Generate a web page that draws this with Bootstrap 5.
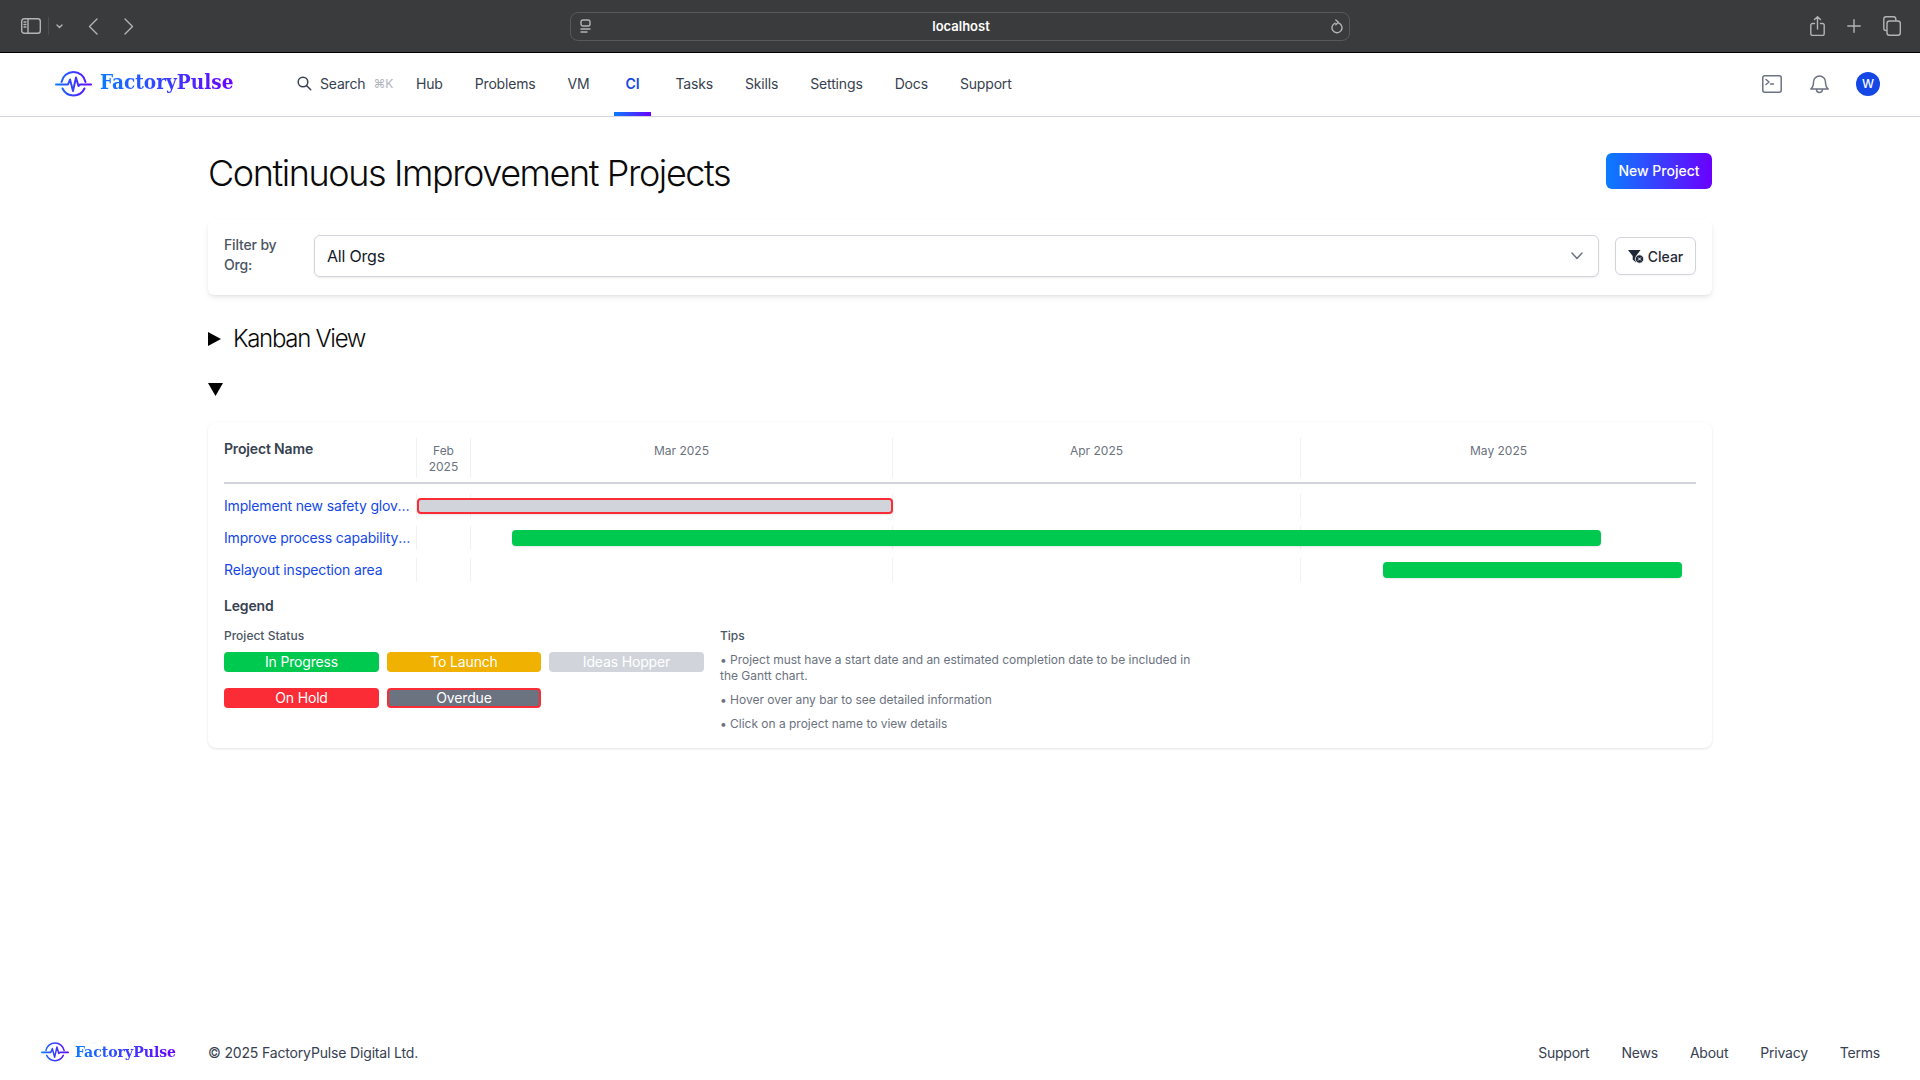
<!DOCTYPE html>
<html lang="en">
<head>
<meta charset="utf-8">
<title>Continuous Improvement Projects</title>
<link href="https://cdn.jsdelivr.net/npm/bootstrap@5.3.0/dist/css/bootstrap.min.css" rel="stylesheet">
<style>
body{font-family:Inter,"Liberation Sans",sans-serif;background:#fff;color:#111827;font-size:14px;letter-spacing:-.16px}
.fp-shell{min-height:1080px}
.chrome-bar{height:53px;background:#3a3b3d;border-bottom:1px solid #000;padding:0 19px 0 21px}
.chrome-icon{stroke:#b4b4b6;fill:none;stroke-width:1.4;stroke-linecap:round;stroke-linejoin:round;display:block}
.chrome-left{width:549px}
.chrome-url{width:780px;height:29px;border:1px solid #58595b;border-radius:8px;color:#fff;font-size:13px;font-weight:600;padding:0 6px 0 9px;letter-spacing:0}
.chrome-url span{margin-top:1px}
.chrome-right{gap:22px;margin-left:auto}
.fp-nav{height:64px;border-bottom:1px solid #d1d5db;padding:0 40px 1px 55px;background:#fff}
.brand-word{font-family:"DejaVu Serif Condensed","DejaVu Serif",serif;font-weight:700;background:linear-gradient(90deg,#0a7cff,#6a00ff);-webkit-background-clip:text;background-clip:text;color:transparent;line-height:1.2;letter-spacing:0}
.brand-lg{font-size:20.6px;margin-left:8px;margin-top:-4px}
.brand-sm{font-size:15.6px;margin-left:6px}
.fp-search{color:#374151;margin-left:63.5px;width:107px;padding-bottom:1px}
.fp-search kbd{all:unset;color:#b0b5bd;font-size:12px;margin-left:8px}
.fp-links{gap:8px;margin-left:0;align-self:stretch}
.fp-link{color:#374151;text-decoration:none;padding:0 12px 1px;display:flex;align-items:center;height:calc(100% + 1px);position:relative}
.fp-link.is-on{color:#1447e6;font-weight:600;margin:0 4px}
.fp-link.is-on::after{content:"";position:absolute;left:0;right:0;bottom:0;height:4px;background:linear-gradient(90deg,#0a7cff,#6a00ff)}
.nav-tools{gap:28px;margin-left:auto}
.nav-icon{stroke:#6b7280;fill:none;stroke-width:1.5;stroke-linecap:round;stroke-linejoin:round;display:block}
.nav-bell{margin-right:-1px}
.fp-avatar{width:24px;height:24px;border-radius:50%;background:#1447e6;color:#fff;font-size:12px;font-weight:500}
.fp-main{width:1504px;margin:0 auto;padding-top:36px}
.page-head{margin-bottom:27px}
.page-title{font-size:36px;line-height:40px;font-weight:300;color:#0a0a0a;margin:0;letter-spacing:-1.42px}
.btn-grad{background:linear-gradient(90deg,#0a7cff,#6a00ff);color:#fff;border:0;height:36px;width:106px;border-radius:6px;font-size:14px;font-weight:500;padding:0 0 2px}
.btn-grad:hover{color:#fff}
.filter-panel{background:#fff;border-radius:6px;box-shadow:0 3px 6px -1px rgba(0,0,0,.1),0 1px 3px -1px rgba(0,0,0,.08);padding:0 16px 3px;height:75px;gap:16px;margin-bottom:27px}
.filter-label{width:74px;font-size:14px;line-height:20px;font-weight:500;color:#4b5563;padding-bottom:2px;flex:none}
.filter-select{height:42px;border:1px solid #d1d5db;border-radius:6px;box-shadow:0 1px 2px rgba(0,0,0,.08);font-size:16px;padding:0 40px 0 12px;color:#111827;letter-spacing:-.2px;background-size:14px 10px;background-position:right 14px center;background-image:url("data:image/svg+xml,%3csvg xmlns='http://www.w3.org/2000/svg' viewBox='0 0 14 10'%3e%3cpath fill='none' stroke='%236b7280' stroke-linecap='round' stroke-linejoin='round' stroke-width='1.5' d='M2 2l5 5.5L12 2'/%3e%3c/svg%3e")}
.btn-clear{height:38px;width:81px;border:1px solid #d1d5db;border-radius:6px;background:#fff;color:#1f2937;font-size:14px;font-weight:500;padding:0;gap:3px;box-shadow:0 1px 2px rgba(0,0,0,.04)}
.fold-head{list-style:none;font-size:24px;line-height:34px;font-weight:300;color:#0a0a0a;gap:12px;cursor:pointer;letter-spacing:-1.3px}
.fold-head::-webkit-details-marker{display:none}
.fold-gap{margin-bottom:17px}
.fold-empty{height:32px;margin-bottom:18px}
.gantt-panel{background:#fff;border-radius:8px;box-shadow:0 1px 3px rgba(0,0,0,.1),0 1px 2px -1px rgba(0,0,0,.06);padding:15px 16px 0;height:325px}
.gantt-head{border-bottom:2px solid #d1d5db;height:46px;padding-bottom:4px;margin-bottom:10px}
.gantt-name{width:192px;flex:none}
.gantt-title{font-weight:600;color:#374151;line-height:20px;padding-top:1px}
.gantt-scale{display:grid;grid-template-columns:54px 422px 408px 1fr;flex:1 1 auto;min-width:0}
.gantt-cell{border-left:1px solid #f0f1f3}
.gantt-month{font-size:12px;line-height:16px;color:#6b7280;text-align:center;padding-top:5px;letter-spacing:0}
.gantt-row{height:24px;margin-bottom:8px}
.gantt-link{color:#1447e6;text-decoration:none;line-height:24px;padding-right:3px;white-space:nowrap;overflow:hidden;text-overflow:ellipsis}
.gantt-track{position:relative}
.gantt-bar{position:absolute;top:4px;height:16px;border-radius:4px;box-shadow:0 1px 2px rgba(0,0,0,.1)}
.bar-go{background:#00c950}
.bar-late{background:#d1d5db;border:2px solid #fb2c36}
.legend-title{font-weight:600;color:#374151;line-height:20px;margin-top:14px;margin-bottom:12px}
.legend-grid{display:grid;grid-template-columns:480px 472px;gap:16px}
.legend-sub{font-size:12px;line-height:16px;font-weight:500;color:#4b5563;margin-bottom:8px;letter-spacing:0}
.chip-grid{display:grid;grid-template-columns:155px 154px 155px;column-gap:8px;row-gap:16px}
.chip-item{height:20px;border-radius:4px;color:#fff;font-size:14px;line-height:20px;text-align:center}
.chip-go{background:#00c950}
.chip-launch{background:#f0b100}
.chip-idea{background:#d1d5db}
.chip-hold{background:#fb2c36}
.chip-late{background:#6b7280;border:2px solid #fb2c36;line-height:16px}
.tip-line{font-size:12px;line-height:16px;color:#6b7280;margin:0 0 8px;letter-spacing:-.02px}
.fp-foot{margin-top:auto;height:56px;padding:0 40px 0 41px;color:#374151}
.foot-brand{width:167px}
.foot-links{gap:32px;margin-left:auto;letter-spacing:-.22px}
.foot-links a{color:#374151;text-decoration:none}
</style>
</head>
<body>
<svg width="0" height="0" class="position-absolute">
  <defs>
    <linearGradient id="pulseGrad" gradientUnits="userSpaceOnUse" x1="0" y1="0" x2="37" y2="0"><stop offset="0" stop-color="#0a7cff"/><stop offset="1" stop-color="#6a00ff"/></linearGradient>
    <symbol id="pulseMark" viewBox="0 0 37 26">
      <g fill="none" stroke="url(#pulseGrad)" stroke-width="2" stroke-linecap="round" stroke-linejoin="round">
        <path d="M6.500 11A12.200 12.200 0 0 1 30.500 11"/>
        <path d="M7.500 17.500A12.200 12.200 0 0 0 29.500 17.500"/>
        <path d="M1 13.500H13L15 8.500L18 20L21 6.500L23.500 15L25 13.500H36"/>
      </g>
    </symbol>
  </defs>
</svg>
<div class="fp-shell d-flex flex-column">
  <div class="chrome-bar d-flex align-items-center">
    <div class="chrome-left d-flex align-items-center">
      <svg class="chrome-icon" width="20" height="16" viewBox="0 0 20 16"><rect x=".7" y=".7" width="18.600" height="14.600" rx="2.500"/><path d="M7 1v14M3 4h2M3 6.500h2M3 9h2"/></svg>
      <span class="d-block" style="width:1px;height:18px;background:#4d4e50;margin:0 7px"></span>
      <svg class="chrome-icon" width="7" height="5" viewBox="0 0 7 5"><path d="M1 1l2.500 2.500L6 1"/></svg>
      <svg class="chrome-icon" width="10" height="17" viewBox="0 0 10 17" style="margin-left:25px"><path d="M9 1L1.500 8.500L9 16"/></svg>
      <svg class="chrome-icon" width="10" height="17" viewBox="0 0 10 17" style="margin-left:26px"><path d="M1 1l7.500 7.500L1 16"/></svg>
    </div>
    <div class="chrome-url d-flex align-items-center justify-content-between">
      <svg class="chrome-icon" width="11" height="15" viewBox="0 0 11 15"><rect x="1" y="1" width="9" height="6" rx="2"/><path d="M1 10h9M1 13h6"/></svg>
      <span>localhost</span>
      <svg class="chrome-icon" width="12" height="15" viewBox="0 0 12 15"><path d="M8 4.200a5 5 0 1 1-3.800-.1M4.800 1L7.400 3.200L4.800 5.700"/></svg>
    </div>
    <div class="chrome-right d-flex align-items-center">
      <svg class="chrome-icon" width="15" height="20" viewBox="0 0 15 20"><path d="M4.500 7.500H2.500a1.700 1.700 0 0 0-1.700 1.700v8.500a1.700 1.700 0 0 0 1.700 1.700h10a1.700 1.700 0 0 0 1.700-1.700V9.200a1.700 1.700 0 0 0-1.700-1.700H10.500M7.500 13V1M4.500 3.500L7.500 .8l3 2.700"/></svg>
      <svg class="chrome-icon" width="14" height="14" viewBox="0 0 14 14"><path d="M7 .8v12.400M.8 7h12.400"/></svg>
      <svg class="chrome-icon" width="18" height="20" viewBox="0 0 18 20"><rect x="4" y="5" width="13.300" height="14.300" rx="2.500"/><path d="M3.500 14.500H3A2.300 2.300 0 0 1 .8 12.200V3A2.300 2.300 0 0 1 3 .8h7.500A2.300 2.300 0 0 1 12.800 3v1.500"/></svg>
    </div>
  </div>

  <nav class="fp-nav d-flex align-items-center">
    <div class="d-flex align-items-center">
      <svg width="37" height="26"><use href="#pulseMark"/></svg>
      <span class="brand-word brand-lg">FactoryPulse</span>
    </div>
    <div class="fp-search d-flex align-items-center">
      <svg class="me-2" width="15" height="15" viewBox="0 0 15 15" fill="none" stroke="#374151" stroke-width="1.500" stroke-linecap="round"><circle cx="6" cy="6" r="4.800"/><path d="M9.700 9.700l4 4"/></svg>
      <span>Search</span><kbd>⌘K</kbd>
    </div>
    <div class="fp-links d-flex align-items-center">
      <a class="fp-link" href="#">Hub</a>
      <a class="fp-link" href="#">Problems</a>
      <a class="fp-link" href="#">VM</a>
      <a class="fp-link is-on" href="#">CI</a>
      <a class="fp-link" href="#">Tasks</a>
      <a class="fp-link" href="#">Skills</a>
      <a class="fp-link" href="#">Settings</a>
      <a class="fp-link" href="#">Docs</a>
      <a class="fp-link" href="#">Support</a>
    </div>
    <div class="nav-tools d-flex align-items-center">
      <svg class="nav-icon" width="20" height="18" viewBox="0 0 20 18"><rect x=".8" y=".8" width="18.400" height="16.400" rx="2"/><path d="M4 4.500l3 2.500l-3 2.500M8.500 9h3"/></svg>
      <svg class="nav-icon nav-bell" width="19" height="20" viewBox="0 0 19 20"><path d="M3.500 8a6 6 0 0 1 12 0c0 5 2.700 7 2.700 7H.8s2.700-2 2.700-7M6.500 15.500a3 3 0 0 0 6 0"/></svg>
      <span class="fp-avatar d-flex align-items-center justify-content-center">W</span>
    </div>
  </nav>

  <main class="fp-main">
    <div class="page-head d-flex justify-content-between align-items-start">
      <h1 class="page-title">Continuous Improvement Projects</h1>
      <button class="btn btn-grad" type="button">New Project</button>
    </div>

    <div class="filter-panel d-flex align-items-center">
      <label class="filter-label" for="orgPick">Filter by Org:</label>
      <select id="orgPick" class="form-select filter-select flex-grow-1"><option>All Orgs</option></select>
      <button class="btn btn-clear d-flex align-items-center justify-content-center flex-shrink-0" type="button">
        <svg width="17" height="15" viewBox="0 0 17 15"><path d="M0 1h12.500L8 7v6.500L4.700 10.500V7z" fill="#1f2937"/><circle cx="11.500" cy="10" r="4.200" fill="#1f2937" stroke="#fff" stroke-width=".8"/><path d="M10 8.500l3 3M13 8.500l-3 3" stroke="#fff" stroke-width="1"/></svg>
        Clear
      </button>
    </div>

    <details class="fold-gap">
      <summary class="fold-head d-flex align-items-center">
        <svg width="13" height="14" viewBox="0 0 13 14"><path d="M0 0l13 7L0 14z" fill="#000"/></svg>
        Kanban View
      </summary>
    </details>

    <details open>
      <summary class="fold-head fold-empty d-flex align-items-center">
        <svg width="15" height="13" viewBox="0 0 15 13"><path d="M0 0h15L7.500 13z" fill="#000"/></svg>
      </summary>
      <div class="gantt-panel">
        <div class="gantt-head d-flex">
          <div class="gantt-name gantt-title">Project Name</div>
          <div class="gantt-scale">
            <div class="gantt-cell gantt-month">Feb<br>2025</div>
            <div class="gantt-cell gantt-month">Mar 2025</div>
            <div class="gantt-cell gantt-month">Apr 2025</div>
            <div class="gantt-cell gantt-month">May 2025</div>
          </div>
        </div>

        <div class="gantt-row d-flex">
          <a class="gantt-name gantt-link" href="#">Implement new safety gloves programme</a>
          <div class="gantt-scale gantt-track">
            <div class="gantt-cell"></div><div class="gantt-cell"></div><div class="gantt-cell"></div><div class="gantt-cell"></div>
            <div class="gantt-bar bar-late" style="left:1px;width:476px"></div>
          </div>
        </div>
        <div class="gantt-row d-flex">
          <a class="gantt-name gantt-link" href="#">Improve process capability analysis</a>
          <div class="gantt-scale gantt-track">
            <div class="gantt-cell"></div><div class="gantt-cell"></div><div class="gantt-cell"></div><div class="gantt-cell"></div>
            <div class="gantt-bar bar-go" style="left:96px;width:1089px"></div>
          </div>
        </div>
        <div class="gantt-row d-flex">
          <a class="gantt-name gantt-link" href="#">Relayout inspection area</a>
          <div class="gantt-scale gantt-track">
            <div class="gantt-cell"></div><div class="gantt-cell"></div><div class="gantt-cell"></div><div class="gantt-cell"></div>
            <div class="gantt-bar bar-go" style="left:967px;width:299px"></div>
          </div>
        </div>

        <div class="legend-title">Legend</div>
        <div class="legend-grid">
          <div>
            <div class="legend-sub">Project Status</div>
            <div class="chip-grid">
              <div class="chip-item chip-go">In Progress</div>
              <div class="chip-item chip-launch">To Launch</div>
              <div class="chip-item chip-idea">Ideas Hopper</div>
              <div class="chip-item chip-hold">On Hold</div>
              <div class="chip-item chip-late">Overdue</div>
            </div>
          </div>
          <div>
            <div class="legend-sub">Tips</div>
            <p class="tip-line">• Project must have a start date and an estimated completion date to be included in the Gantt chart.</p>
            <p class="tip-line">• Hover over any bar to see detailed information</p>
            <p class="tip-line">• Click on a project name to view details</p>
          </div>
        </div>
      </div>
    </details>
  </main>

  <footer class="fp-foot d-flex align-items-center">
    <div class="foot-brand d-flex align-items-center">
      <svg width="28" height="20"><use href="#pulseMark"/></svg>
      <span class="brand-word brand-sm">FactoryPulse</span>
    </div>
    <span>© 2025 FactoryPulse Digital Ltd.</span>
    <div class="foot-links d-flex">
      <a href="#">Support</a><a href="#">News</a><a href="#">About</a><a href="#">Privacy</a><a href="#">Terms</a>
    </div>
  </footer>
</div>
<script src="https://cdn.jsdelivr.net/npm/bootstrap@5.3.0/dist/js/bootstrap.bundle.min.js"></script>
</body>
</html>
